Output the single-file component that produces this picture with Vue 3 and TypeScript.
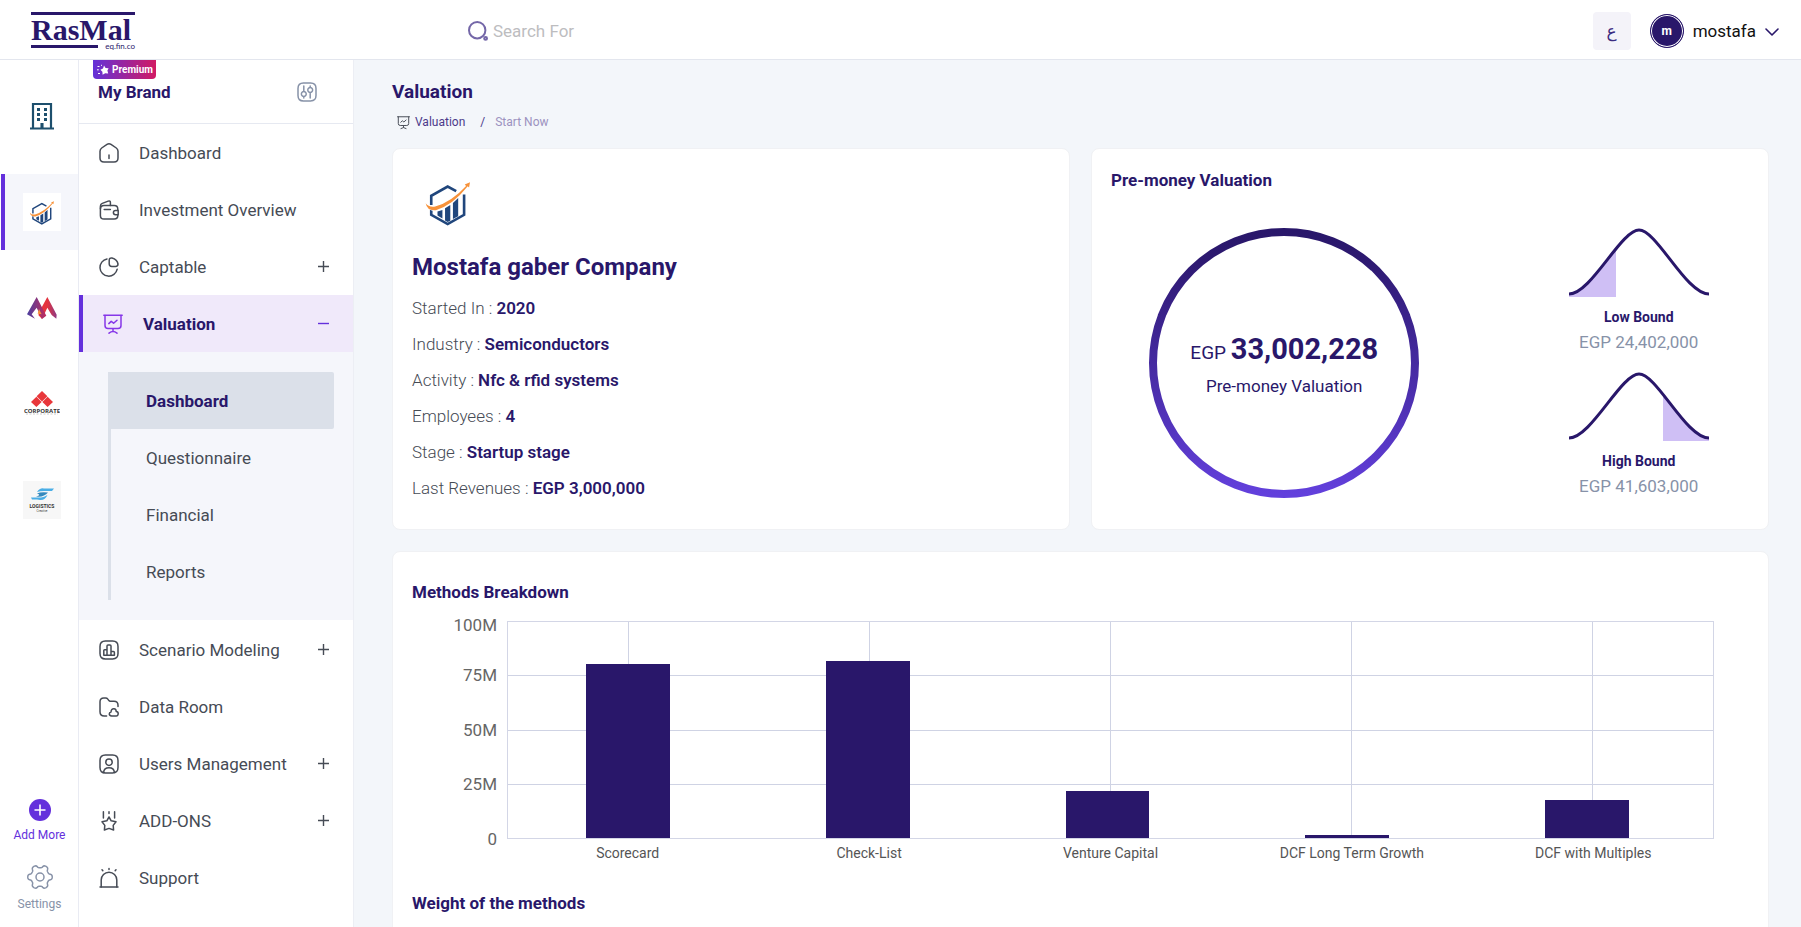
<script setup lang="ts">
interface NavItem {
  label: string
  icon: string
  expandable?: boolean
}

const icons: Record<string, string[]> = {
  home: [
    'M1 8.2C1 6.6 1.5 5.9 2.7 5L8 1.4Q10 0 12 1.4L17.3 5C18.5 5.9 19 6.6 19 8.2V15Q19 19 15 19H5Q1 19 1 15Z',
    'M10 12V15.5',
  ],
  wallet: [
    'M18.8 10V9.2Q18.8 5.6 15.2 5.6H5Q1.4 5.6 1.4 9.2V15.4Q1.4 19 5 19H15.2Q18.8 19 18.8 15.8V15',
    'M1.4 8.8V6.2Q1.4 4.2 3.3 3.4L9.2 1.1Q11.4 .4 11.4 2.6V5.4',
    'M5.2 9.6H11.4',
    'M19.2 10.4H16.6A2.2 2.2 0 0 0 16.6 14.8H19.2Z',
  ],
  pie: [
    'M8 1.9A8.7 8.7 0 1 0 18.2 12.2',
    'M10.2 3.4V6.8Q10.2 9.4 12.8 9.4H16.6Q19 9.4 19 7Q18.2 2.4 13 1Q10.2 .6 10.2 3.4Z',
  ],
  board: [
    'M.8 1.2H19.2',
    'M2 1.4V11.6Q2 14.6 5 14.6H15Q18 14.6 18 11.6V1.4',
    'M10 14.8V17.4M6 19.2Q10 16 14 19.2',
    'M5.8 9.6L8.2 7.4L10.6 9.2L14 6.2',
  ],
  bars: [
    'M6.4 1H13.6Q19 1 19 6.4V13.6Q19 19 13.6 19H6.4Q1 19 1 13.6V6.4Q1 1 6.4 1Z',
    'M4.8 15V10.6Q4.8 9.8 5.6 9.8H8V15.2H4.8ZM8 15.2V6Q8 5 9 5H11Q12 5 12 6V15.2ZM12 11.4H14.4Q15.4 11.4 15.4 12.4V15.2H12Z',
  ],
  folder: [
    'M7.6 19H5.2Q1 19 1 14.8V4.8Q1 1 4.8 1H6.6Q8 1 8.8 2.1L9.9 3.6Q10.4 4.2 11.2 4.2H15Q19 4.2 19 8.2V9.4',
    'M12.6 19Q10.2 18.8 10.3 16.8Q10.5 15.2 12 15Q12.2 11.6 15 11.8Q17.2 12 17.2 14.4Q19.2 14.4 19.2 16.8Q19 19 17.2 19Z',
  ],
  user: [
    'M6.4 1H13.6Q19 1 19 6.4V13.6Q19 19 13.6 19H6.4Q1 19 1 13.6V6.4Q1 1 6.4 1Z',
    'M10 5A3.2 3.2 0 1 1 10 11.4A3.2 3.2 0 1 1 10 5Z',
    'M4.6 18.4Q5 13.8 10 13.8T15.4 18.4',
  ],
  medal: [
    'M10 6L12.2 9.8L17 10.8L14.2 14.4L14.6 19L10 17.4L5.4 19L5.8 14.4L3 10.8L7.8 9.8Z',
    'M4.4 .8V7M15.6 .8V7M10 .8V2.4',
  ],
  alarm: [
    'M1 19H19',
    'M2.2 19V12A7.8 7.8 0 0 1 17.8 12V19',
    'M10 .4V1.4M3 1.8L3.8 2.6M17 1.8L16.2 2.6',
  ],
  sliders: [
    'M6.4 1H13.6Q19 1 19 6.4V13.6Q19 19 13.6 19H6.4Q1 19 1 13.6V6.4Q1 1 6.4 1Z',
    'M6.8 4V9M6.8 14.6V16M6.8 9.6A2.4 2.4 0 1 1 6.8 14.4A2.4 2.4 0 1 1 6.8 9.6Z',
    'M13.2 16V11M13.2 5.4V4M13.2 5.6A2.4 2.4 0 1 1 13.2 10.4A2.4 2.4 0 1 1 13.2 5.6Z',
  ],
}

const topItems: NavItem[] = [
  { label: 'Dashboard', icon: 'home' },
  { label: 'Investment Overview', icon: 'wallet' },
  { label: 'Captable', icon: 'pie', expandable: true },
]
const subItems = ['Dashboard', 'Questionnaire', 'Financial', 'Reports']
const bottomItems: NavItem[] = [
  { label: 'Scenario Modeling', icon: 'bars', expandable: true },
  { label: 'Data Room', icon: 'folder' },
  { label: 'Users Management', icon: 'user', expandable: true },
  { label: 'ADD-ONS', icon: 'medal', expandable: true },
  { label: 'Support', icon: 'alarm' },
]

const facts = [
  ['Started In', '2020'],
  ['Industry', 'Semiconductors'],
  ['Activity', 'Nfc & rfid systems'],
  ['Employees', '4'],
  ['Stage', 'Startup stage'],
  ['Last Revenues', 'EGP 3,000,000'],
]

const ticks = ['100M', '75M', '50M', '25M', '0']
const methods = [
  { name: 'Scorecard', value: 80.7 },
  { name: 'Check-List', value: 81.9 },
  { name: 'Venture Capital', value: 21.7 },
  { name: 'DCF Long Term Growth', value: 1.3 },
  { name: 'DCF with Multiples', value: 17.7 },
]

// Six-lobed gear outline, sampled around the circle.
const gear =
  'M' +
  Array.from({ length: 120 }, (_, i) => {
    const a = (i / 120) * Math.PI * 2
    const r = 10.7 + 1.6 * Math.tanh(1.8 * Math.cos(6 * a))
    return `${(13 + r * Math.cos(a)).toFixed(2)} ${(13 + r * Math.sin(a)).toFixed(2)}`
  }).join('L') +
  'Z'
</script>

<template>
  <div class="app">
    <svg class="defs" aria-hidden="true">
      <symbol id="company-mark" viewBox="0 0 146 140">
        <path d="M22 76V48L72 20L98 34M122 44V106L72 134L22 106V90" fill="none" stroke="#20467c" stroke-width="8" />
        <path d="M41 96L56 91V117L41 108ZM64 86L80 76V124L72 128L64 123ZM88 70L104 55V110L88 119Z" fill="#20467c" />
        <path d="M5 71Q14 84 34 81Q84 66 128 18L124 14L140 7L137 23L133 19Q88 76 36 92Q10 95 5 71Z" fill="#f7923a" stroke="#fff" stroke-width="3" paint-order="stroke" />
      </symbol>
    </svg>

    <header class="topbar">
      <a class="logo" href="#">
        <span class="logo-name">RasMal</span>
        <span class="logo-foot"><i></i><small>eq.fin.co</small></span>
      </a>
      <label class="search">
        <svg width="20" height="20" viewBox="0 0 20 20" fill="none" stroke="#7467a8" stroke-width="2">
          <circle cx="9.2" cy="9.2" r="8.2" />
          <circle cx="17.6" cy="17.4" r="1.4" />
        </svg>
        <input type="text" placeholder="Search For" aria-label="Search For" />
      </label>
      <button class="lang" type="button">ع</button>
      <button class="account" type="button">
        <span class="avatar"><b>m</b></span>
        <span>mostafa</span>
        <svg class="chevron" width="14" height="8" viewBox="0 0 14 8" fill="none" stroke="#29176a" stroke-width="1.600" stroke-linecap="round" stroke-linejoin="round"><path d="M1 1L7 7L13 1" /></svg>
      </button>
    </header>

    <div class="body">
      <aside class="rail">
        <a class="brand" href="#" aria-label="Building">
          <svg width="24" height="28" viewBox="0 0 24 28">
            <path d="M3 26V2H21V26M0 26.5H24M12 26V21" fill="none" stroke="#1d4f6d" stroke-width="2.2" />
            <path d="M7 6h3v3H7zM14 6h3v3h-3zM7 11h3v3H7zM14 11h3v3h-3zM7 16h3v3H7zM14 16h3v3h-3zM10.500 21h3v6h-3z" fill="#1d4f6d" />
          </svg>
        </a>
        <a class="brand current" href="#" aria-label="Mostafa gaber Company">
          <span class="tile"><svg width="26" height="25"><use href="#company-mark" /></svg></span>
        </a>
        <a class="brand" href="#" aria-label="M brand">
          <svg width="30" height="22" viewBox="0 0 90 66">
            <defs>
              <linearGradient id="m-left"><stop offset="0" stop-color="#4a3fa0" /><stop offset="1" stop-color="#c22c5c" /></linearGradient>
              <linearGradient id="m-right"><stop offset="0" stop-color="#ee3338" /><stop offset=".5" stop-color="#e2333f" /><stop offset="1" stop-color="#8c3a86" /></linearGradient>
            </defs>
            <path d="M61 0L89 53L88 65L74 54L61 32L45 66L34 54L43 33Z" fill="url(#m-right)" />
            <path d="M29 0L58 56L45 66L29 32L14 52L24 65L0 52Z" fill="url(#m-left)" />
            <path d="M36 36L44 52L32 50Z" fill="#f7923a" />
          </svg>
        </a>
        <a class="brand" href="#" aria-label="Corporate">
          <svg width="36" height="26" viewBox="0 0 36 26">
            <path d="M18 0L23.400 5.200L18 10.400L12.600 5.200ZM12.400 5.800L17.600 11L12.400 16L7 11ZM23.600 5.800L29 11L23.600 16L18.400 11Z" fill="#e8373b" />
            <text x="18" y="21.500" text-anchor="middle" class="corp">CORPORATE</text>
            <path d="M2 23H34" stroke="#ccc" stroke-dasharray="2 1.500" />
          </svg>
        </a>
        <a class="brand" href="#" aria-label="Logistics">
          <span class="tile grey">
            <svg width="38" height="38" viewBox="0 0 38 38">
              <path d="M14 11Q17 6.500 21 7.500H31L29 10H21Q17 10 14 11Z" fill="#4aaee6" />
              <path d="M8 16.500H18Q21 16 24.500 14Q22 19.500 17 19L14 18.500H9Z" fill="#4aaee6" />
              <path d="M14 12.500Q18 10.500 25 11.500Q21 16.500 13 15.500Q19 14 14 12.500Z" fill="#3589bd" />
              <text x="19" y="26.500" text-anchor="middle" class="logi">LOGISTICS</text>
              <text x="19" y="30.500" text-anchor="middle" class="logi-sub">Creative</text>
            </svg>
          </span>
        </a>
        <div class="rail-foot">
          <button class="add" type="button">
            <svg width="22" height="22" viewBox="0 0 22 22"><circle cx="11" cy="11" r="11" fill="#6430dc" /><path d="M11 5.500V16.500M5.500 11H16.500" stroke="#fff" stroke-width="1.600" /></svg>
            <span>Add More</span>
          </button>
          <button class="settings" type="button">
            <svg width="26" height="26" viewBox="0 0 26 26" fill="none" stroke="#8792a8" stroke-width="1.500"><path :d="gear" /><circle cx="13" cy="13" r="4" /></svg>
            <span>Settings</span>
          </button>
        </div>
      </aside>

      <nav class="sidebar">
        <div class="side-head">
          <span class="premium">
            <svg width="12" height="12" viewBox="0 0 12 12" fill="#fff"><path d="M7 1.500L8.600 4L11.600 4.200L10.400 6.600L11.200 9.600L8.200 9.200L5.600 10.800L5.400 7.800L3.400 5.800L6 4.600Z" /><path d="M.5 2.500H2.500M0 5.800H1.800M1 9.500H3M4 1L5 1.600" stroke="#fff" fill="none" /></svg>
            Premium
          </span>
          <div class="side-title">
            <h2>My Brand</h2>
            <button class="filter" type="button" aria-label="Filters">
              <svg class="icon" viewBox="0 0 20 20"><path v-for="d in icons.sliders" :key="d" :d="d" /></svg>
            </button>
          </div>
        </div>

        <a v-for="item in topItems" :key="item.label" class="nav-item" href="#">
          <svg class="icon" viewBox="0 0 20 20"><path v-for="d in icons[item.icon]" :key="d" :d="d" /></svg>
          <span>{{ item.label }}</span>
          <svg v-if="item.expandable" class="sign" viewBox="0 0 11 11"><path d="M5.5 0V11M0 5.500H11" /></svg>
        </a>
        <a class="nav-item active" href="#">
          <svg class="icon" viewBox="0 0 20 20"><path v-for="d in icons.board" :key="d" :d="d" /></svg>
          <span>Valuation</span>
          <svg class="sign" viewBox="0 0 11 11"><path d="M0 5.500H11" /></svg>
        </a>
        <div class="submenu">
          <div class="sublist">
            <a v-for="(label, i) in subItems" :key="label" href="#" :class="['sub-item', { chosen: i === 0 }]">{{ label }}</a>
          </div>
        </div>
        <a v-for="item in bottomItems" :key="item.label" class="nav-item" href="#">
          <svg class="icon" viewBox="0 0 20 20"><path v-for="d in icons[item.icon]" :key="d" :d="d" /></svg>
          <span>{{ item.label }}</span>
          <svg v-if="item.expandable" class="sign" viewBox="0 0 11 11"><path d="M5.5 0V11M0 5.500H11" /></svg>
        </a>
      </nav>

      <main class="content">
        <h1>Valuation</h1>
        <div class="crumbs">
          <svg class="icon" viewBox="0 0 20 20"><path v-for="d in icons.board" :key="d" :d="d" /></svg>
          <a href="#">Valuation</a>
          <span class="slash">/</span>
          <span class="here">Start Now</span>
        </div>

        <div class="cards">
          <section class="card company">
            <svg class="company-logo" width="48" height="46"><use href="#company-mark" /></svg>
            <h2>Mostafa gaber Company</h2>
            <p v-for="[label, value] in facts" :key="label">{{ label }} <i>:</i> <b>{{ value }}</b></p>
          </section>

          <section class="card premoney">
            <h3>Pre-money Valuation</h3>
            <div class="premoney-body">
              <div class="ring">
                <svg width="270" height="270" viewBox="0 0 270 270">
                  <defs><linearGradient id="ring-fill" x1="0" y1="0" x2="0" y2="1"><stop offset="0" stop-color="#29176a" /><stop offset=".1" stop-color="#2d1970" /><stop offset=".9" stop-color="#5d3bd0" /><stop offset="1" stop-color="#6240dc" /></linearGradient></defs>
                  <circle cx="135" cy="135" r="131" fill="none" stroke="url(#ring-fill)" stroke-width="8" />
                </svg>
                <div class="ring-text">
                  <p class="amount">EGP <b>33,002,228</b></p>
                  <p class="caption">Pre-money Valuation</p>
                </div>
              </div>
              <div class="bounds">
                <div class="bound">
                  <svg width="140" height="69" viewBox="0 0 140 69">
                    <path d="M0 66C22 66 52 2 70 2V69H0Z" fill="#cfbff5" class="low-area" />
                    <path d="M0 66C22 66 52 2 70 2C88 2 117 66 140 66" fill="none" stroke="#29176a" stroke-width="3" />
                  </svg>
                  <h4>Low Bound</h4>
                  <p>EGP 24,402,000</p>
                </div>
                <div class="bound">
                  <svg width="140" height="69" viewBox="0 0 140 69">
                    <path d="M70 2C88 2 117 66 140 66V69H70Z" fill="#cfbff5" class="high-area" />
                    <path d="M0 66C22 66 52 2 70 2C88 2 117 66 140 66" fill="none" stroke="#29176a" stroke-width="3" />
                  </svg>
                  <h4>High Bound</h4>
                  <p>EGP 41,603,000</p>
                </div>
              </div>
            </div>
          </section>

          <section class="card breakdown">
            <h3>Methods Breakdown</h3>
            <div class="chart">
              <div class="y-axis"><span v-for="t in ticks" :key="t">{{ t }}</span></div>
              <div class="plot">
                <div class="rows"><i v-for="n in 4" :key="n"></i></div>
                <div class="cols"><i v-for="n in 5" :key="n"></i></div>
                <div class="bars">
                  <div v-for="m in methods" :key="m.name" class="slot"><i :style="{ height: m.value + '%' }"></i></div>
                </div>
              </div>
              <div class="x-axis"><span v-for="m in methods" :key="m.name">{{ m.name }}</span></div>
            </div>
            <h3>Weight of the methods</h3>
          </section>
        </div>
      </main>
    </div>
  </div>
</template>

<style>
body {
  margin: 0;
}
</style>

<style scoped>
.app,
.app * {
  box-sizing: border-box;
}
.app {
  display: flex;
  flex-direction: column;
  height: 100vh;
  overflow: hidden;
  background: #fff;
  color: #464b55;
  font-family: Roboto, sans-serif;
  font-size: 17px;
}
.defs {
  position: absolute;
  width: 0;
  height: 0;
}
h1, h2, h3, h4, p {
  margin: 0;
}
a {
  color: inherit;
  text-decoration: none;
}
button {
  border: 0;
  padding: 0;
  background: none;
  font: inherit;
  cursor: pointer;
}
svg {
  display: block;
  flex: none;
}
.icon {
  width: 20px;
  height: 20px;
  fill: none;
  stroke: currentColor;
  stroke-width: 1.5;
  stroke-linecap: round;
  stroke-linejoin: round;
  overflow: visible;
}

/* top bar */
.topbar {
  display: flex;
  align-items: center;
  flex: none;
  height: 60px;
  padding: 0 22px 0 31px;
  border-bottom: 1px solid #e3e6ee;
}
.logo {
  align-self: flex-start;
  width: 104px;
  margin: 12px 333px 0 0;
  border-top: 3px solid #29176a;
  color: #29176a;
}
.logo-name {
  display: block;
  font: bold 30px/30px "Liberation Serif", serif;
}
.logo-foot {
  display: flex;
  align-items: center;
  justify-content: space-between;
  height: 10px;
  margin-top: -4px;
}
.logo-foot i {
  width: 67px;
  height: 3px;
  background: #29176a;
}
.logo-foot small {
  font: 400 8px/10px Lato, sans-serif;
}
.search {
  display: flex;
  align-items: center;
  gap: 5px;
  flex: 1;
  margin-top: 2px;
}
.search input {
  flex: 1;
  border: 0;
  padding: 0;
  outline: 0;
  background: none;
  font: inherit;
  color: #29176a;
}
.search input::placeholder {
  color: #bdbdbf;
  opacity: 1;
}
.lang {
  width: 38px;
  height: 38px;
  margin: 2px 19px 0 0;
  border-radius: 4px;
  background: #f4f3f9;
  color: #3c2b80;
  font-family: "DejaVu Sans", sans-serif;
}
.account {
  display: flex;
  align-items: center;
  gap: 9px;
  margin-top: 2px;
  color: #111;
}
.avatar {
  display: grid;
  place-items: center;
  width: 34px;
  height: 34px;
  border: 1px solid #29176a;
  border-radius: 50%;
  background: #29176a;
  box-shadow: inset 0 0 0 1px #fff;
  color: #fff;
  font-size: 12px;
}
.chevron {
  margin-top: 2px;
}

.body {
  display: flex;
  flex: 1;
  min-height: 0;
}

/* brand rail */
.rail {
  display: flex;
  flex-direction: column;
  gap: 20px;
  flex: none;
  width: 79px;
  padding: 18px 0 16px 1px;
  border-right: 1px solid #e9ebf3;
}
.brand {
  display: flex;
  align-items: center;
  justify-content: center;
  flex: none;
  height: 76px;
  padding-left: 4px;
}
.brand.current {
  padding: 0;
  border-left: 4px solid #6430dc;
  background: #f5f6fb;
}
.tile {
  display: grid;
  place-items: center;
  width: 38px;
  height: 38px;
  background: #fff;
}
.tile.grey {
  background: #f7f7f7;
}
.corp {
  font: bold 6px "Open Sans", sans-serif;
  fill: #333;
}
.logi {
  font: bold 5px Roboto, sans-serif;
  fill: #333;
}
.logi-sub {
  font: 3px Roboto, sans-serif;
  fill: #444;
}
.rail-foot {
  display: flex;
  flex-direction: column;
  gap: 22px;
  margin-top: auto;
  font-size: 12px;
  line-height: 14px;
}
.rail-foot button {
  display: flex;
  flex-direction: column;
  align-items: center;
  gap: 7px;
}
.add {
  color: #6430dc;
}
.settings {
  color: #8792a8;
}

/* sidebar */
.sidebar {
  flex: none;
  width: 275px;
  overflow: hidden;
  border-right: 1px solid #eceef4;
}
.side-head {
  height: 64px;
  padding: 0 36px 0 14px;
  border-bottom: 1px solid #e6e9f1;
}
.premium {
  display: flex;
  align-items: center;
  gap: 3px;
  width: 63px;
  height: 19px;
  padding-left: 4px;
  border-radius: 0 0 4px 4px;
  background: linear-gradient(90deg, #6331d8, #d11a63);
  color: #fff;
  font-size: 10px;
  font-weight: 700;
}
.side-title {
  display: flex;
  align-items: center;
  justify-content: space-between;
  height: 25px;
  padding-left: 5px;
  color: #29176a;
}
.side-title h2 {
  font-size: 17px;
  line-height: 20px;
}
.filter {
  color: #8792a8;
}
.nav-item {
  display: flex;
  align-items: center;
  gap: 20px;
  height: 57px;
  padding: 0 24px 0 20px;
}
.nav-item span {
  flex: 1;
}
.sign {
  width: 11px;
  height: 11px;
  stroke: currentColor;
  stroke-width: 1.4;
}
.active {
  border-left: 4px solid #6430dc;
  background: #f0e9fa;
  color: #29176a;
  font-weight: 700;
}
.active .icon {
  color: #8637e8;
}
.active .sign {
  color: #6430dc;
}
.submenu {
  margin-bottom: 1px;
  padding: 20px 19px 20px 29px;
  background: #f5f6fb;
}
.sublist {
  border-left: 3px solid #dbe0e9;
}
.sub-item {
  display: flex;
  align-items: center;
  height: 57px;
  padding-left: 35px;
}
.chosen {
  border-radius: 0 2px 2px 0;
  background: #dbe0e9;
  color: #29176a;
  font-weight: 700;
}

/* main content */
.content {
  flex: 1;
  min-width: 0;
  overflow: auto;
  scrollbar-width: none;
  padding: 20px 32px 40px 38px;
  background: #f3f6fa;
  color: #29176a;
}
h1 {
  font-size: 19px;
  line-height: 24px;
}
.crumbs {
  display: flex;
  align-items: center;
  height: 16px;
  margin: 10px 0 18px;
  padding-left: 5px;
  font-size: 12px;
  color: #4b3a8a;
}
.crumbs .icon {
  width: 13px;
  height: 13px;
  margin-right: 5px;
  color: #464b55;
}
.slash {
  margin: 0 10px 0 15px;
}
.here {
  color: #9c92c0;
}
.cards {
  display: grid;
  grid-template-columns: 1fr 1fr;
  gap: 21px;
}
.card {
  border: 1px solid #f0f1f4;
  border-radius: 8px;
  background: #fff;
}
.company {
  padding: 31px 19px 23px;
}
.company-logo {
  margin: 0 0 27px 12px;
}
.company h2 {
  margin-bottom: 9px;
  font-size: 24px;
  line-height: 28px;
}
.company p {
  line-height: 36px;
  font-weight: 300;
  color: #464b55;
}
.company i {
  font-style: normal;
}
.company b {
  font-weight: 600;
  color: #29176a;
}
h3 {
  font-size: 17px;
  line-height: 20px;
}
.premoney {
  padding: 21px 19px 31px;
}
.premoney-body {
  display: grid;
  grid-template-columns: 11fr 7fr;
  gap: 71px;
  margin-top: 38px;
}
.ring {
  display: grid;
  place-items: center;
}
.ring > * {
  grid-area: 1 / 1;
}
.ring-text {
  padding-top: 8px;
  text-align: center;
}
.amount {
  font-size: 19px;
  line-height: 34px;
}
.amount b {
  font-size: 29px;
}
.caption {
  line-height: 32px;
}
.bounds {
  display: flex;
  flex-direction: column;
  gap: 18px;
}
.bound {
  display: flex;
  flex-direction: column;
  align-items: center;
}
.low-area {
  clip-path: inset(0 23px 0 0);
}
.high-area {
  clip-path: inset(0 0 0 24px);
}
.bound h4 {
  margin: 10px 0 3px;
  font-size: 14px;
  line-height: 20px;
}
.bound p {
  line-height: 24px;
  color: #8792a8;
}
.breakdown {
  grid-column: 1 / -1;
  padding: 30px 19px 40px;
}
.chart {
  display: grid;
  grid-template-columns: 95px 1fr;
  grid-template-rows: 218px auto;
  margin: 19px 0 32px;
  padding-right: 35px;
}
.y-axis {
  display: flex;
  flex-direction: column;
  margin-bottom: -27px;
  padding-right: 10px;
  text-align: right;
  color: #666;
}
.y-axis span {
  flex: 2 1 0;
  line-height: 54px;
}
.y-axis span:first-child {
  flex-grow: 1;
  line-height: 8px;
}
.plot {
  display: grid;
  border: 1px solid #d3d6e6;
}
.plot > div {
  display: flex;
  grid-area: 1 / 1;
}
.plot > .rows {
  flex-direction: column;
}
.rows i {
  flex: 1;
}
.rows i + i {
  border-top: 1px solid #cfd3e4;
}
.cols {
  justify-content: space-around;
}
.cols i {
  width: 1px;
  background: #cfd3e4;
}
.plot > .bars {
  padding-right: 6px;
}
.slot {
  display: flex;
  align-items: flex-end;
  justify-content: center;
  flex: 1;
}
.slot i {
  width: 35%;
  background: #29176a;
}
.x-axis {
  display: grid;
  grid-column: 2;
  grid-template-columns: repeat(5, 1fr);
  margin-top: 6px;
  text-align: center;
  font-size: 14px;
  line-height: 16px;
  color: #555;
}
</style>
